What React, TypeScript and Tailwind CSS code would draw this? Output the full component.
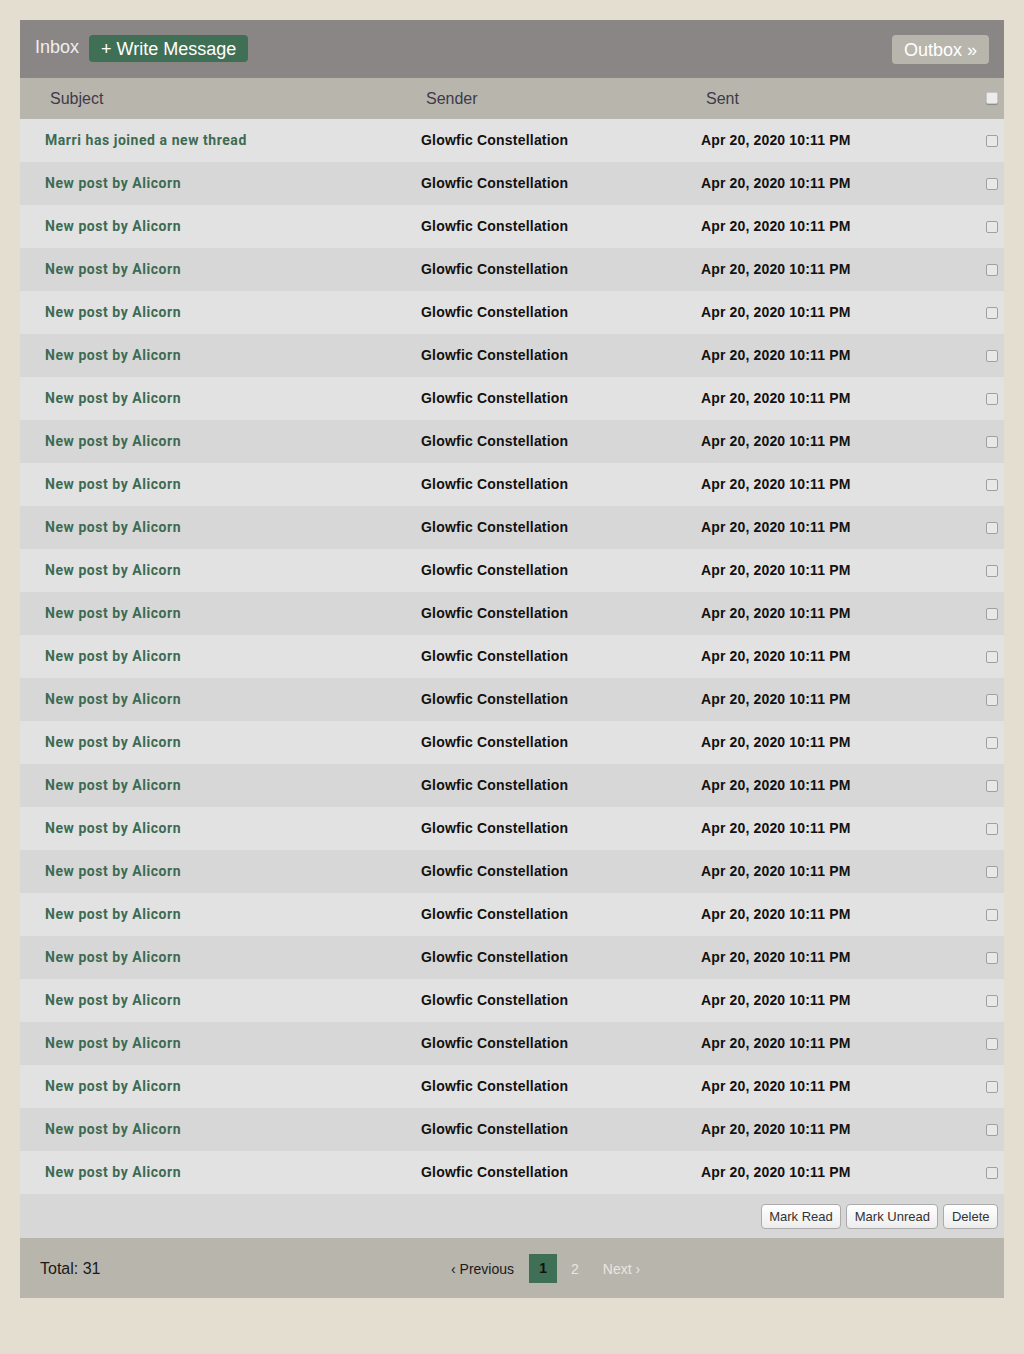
import React from "react";

const rows = [
  "Marri has joined a new thread",
  ...Array.from({ length: 24 }, () => "New post by Alicorn"),
];

function Box({ header = false }: { header?: boolean }) {
  return (
    <span
      className={
        header
          ? "inline-block w-[12px] h-[12px] rounded-[2px] border border-[#c8c8c8] bg-[#ececec] shadow-[0_1px_1px_rgba(0,0,0,0.25)]"
          : "inline-block w-[12px] h-[12px] rounded-[2px] border border-[#a0a0a0] bg-[#e8e8e8]"
      }
    />
  );
}

export default function App() {
  return (
    <div className="min-h-[1354px] bg-[#e4ded1] pt-[20px] px-[20px] font-['Liberation_Sans',Arial,sans-serif]">
      <div className="w-[984px]">
        {/* Header */}
        <div className="h-[58px] bg-[#8a8686] flex items-center px-[15px]">
          <span className="text-[18px] text-[#eeeeee] -mt-[3px]">Inbox</span>
          <button className="ml-[10px] h-[27px] px-[12px] rounded-[4px] bg-[#3f6f55] text-white text-[18px] leading-none -mt-[1px]">
            + Write Message
          </button>
          <div className="flex-1" />
          <button className="h-[29px] px-[12px] rounded-[4px] bg-[#b8b5ad] text-white text-[18px] leading-none mt-[1px]">
            Outbox »
          </button>
        </div>
        {/* Column headers */}
        <div className="h-[41px] bg-[#b8b5ad] flex items-center text-[16px] text-[#3d3a4b]">
          <div className="w-[376px] pl-[30px]">Subject</div>
          <div className="w-[280px] pl-[30px]">Sender</div>
          <div className="flex-1 pl-[30px]">Sent</div>
          <div className="pr-[6px] flex items-center -mt-[1px]">
            <Box header />
          </div>
        </div>
        {/* Rows */}
        {rows.map((s, i) => (
          <div
            key={i}
            className={
              "h-[43px] flex items-center text-[14px] font-bold " +
              (i % 2 === 0 ? "bg-[#e2e2e2]" : "bg-[#d7d7d7]")
            }
          >
            <div className="w-[376px] pl-[25px] font-['Roboto',sans-serif] text-[#3d6b52] tracking-[0.55px]">
              {s}
            </div>
            <div className="w-[280px] pl-[25px] text-[#111111] tracking-[0.2px]">Glowfic Constellation</div>
            <div className="flex-1 pl-[25px] text-[#111111] tracking-[0.15px]">Apr 20, 2020 10:11 PM</div>
            <div className="pr-[6px] flex items-center">
              <Box />
            </div>
          </div>
        ))}
        {/* Actions */}
        <div className="h-[44px] bg-[#d7d7d7] flex items-center justify-end gap-[5px] pr-[6px]">
          {["Mark Read", "Mark Unread", "Delete"].map((t) => (
            <button
              key={t}
              className="h-[25px] px-[7.5px] rounded-[4px] border border-[#ababab] bg-gradient-to-b from-[#ffffff] to-[#ededed] text-[13px] text-[#333333] leading-none"
            >
              {t}
            </button>
          ))}
        </div>
        {/* Pagination */}
        <div className="h-[60px] bg-[#b8b5ad] relative flex items-center px-[20px]">
          <span className="text-[16px] text-[#1a1a1a] mt-[2px]">Total: 31</span>
          <div className="absolute left-[431px] top-[16px] flex items-center text-[14px]">
            <span className="text-[#1a1a1a] mt-[1px]">‹ Previous</span>
            <span className="ml-[15px] w-[28px] h-[29px] bg-[#3f6f55] flex items-center justify-center font-bold text-[#111111]">
              1
            </span>
            <span className="ml-[14px] text-[#e8e6e0] mt-[1px]">2</span>
            <span className="ml-[24px] text-[#e8e6e0] mt-[1px]">Next ›</span>
          </div>
        </div>
      </div>
    </div>
  );
}
